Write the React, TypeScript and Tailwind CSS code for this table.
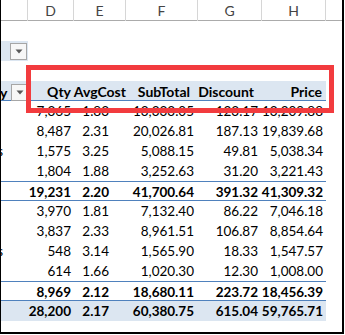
import React from 'react';

type RowKind = 'item' | 'sub' | 'grand';

interface PivotRow {
  kind: RowKind;
  label?: string;
  values: string[];
}

const rows: PivotRow[] = [
  { kind: 'item', values: ['7,365', '1.83', '13,333.05', '123.17', '13,209.88'] },
  { kind: 'item', values: ['8,487', '2.31', '20,026.81', '187.13', '19,839.68'] },
  { kind: 'item', label: 'Cookies', values: ['1,575', '3.25', '5,088.15', '49.81', '5,038.34'] },
  { kind: 'item', values: ['1,804', '1.88', '3,252.63', '31.20', '3,221.43'] },
  { kind: 'sub', values: ['19,231', '2.20', '41,700.64', '391.32', '41,309.32'] },
  { kind: 'item', values: ['3,970', '1.81', '7,132.40', '86.22', '7,046.18'] },
  { kind: 'item', values: ['3,837', '2.33', '8,961.51', '106.87', '8,854.64'] },
  { kind: 'item', label: 'Crackers', values: ['548', '3.14', '1,565.90', '18.33', '1,547.57'] },
  { kind: 'item', values: ['614', '1.66', '1,020.30', '12.30', '1,008.00'] },
  { kind: 'sub', values: ['8,969', '2.12', '18,680.11', '223.72', '18,456.39'] },
  { kind: 'grand', values: ['28,200', '2.17', '60,380.75', '615.04', '59,765.71'] },
];

const headers = ['Qty', 'AvgCost', 'SubTotal', 'Discount', 'Price'];
const letters = ['', 'D', 'E', 'F', 'G', 'H', ''];

// padding on the right of each value column, data vs. header
const dataPad = ['pr-[3px]', 'pr-[17px]', 'pr-[4px]', 'pr-[4px]', 'pr-[3px]'];
const headPad = ['pr-[3px]', 'pr-0', 'pr-[8px]', 'pr-[8px]', 'pr-[4px]'];

const grid = 'grid grid-cols-[27px_46px_52px_72px_64px_64px_1fr]';

function DropButton() {
  return (
    <div className="w-[17px] h-[17px] border border-[#a6a6a6] bg-[#f7f7f7] flex items-center justify-center">
      <svg width="8" height="5" viewBox="0 0 8 5">
        <path d="M0.5 0.5 L7.5 0.5 L4 4.5 Z" fill="#595959" />
      </svg>
    </div>
  );
}

export default function App() {
  return (
    <div
      className="w-[345px] h-[335px] bg-white relative overflow-hidden text-black"
      style={{ fontFamily: 'Lato, "Open Sans", sans-serif' }}
    >
      <div className="w-[344px] h-[334px] border-l border-r-2 border-b-2 border-black overflow-hidden">
        {/* column letters */}
        <div className={`${grid} h-[21px] border-b border-[#ababab]`}>
          {letters.map((l, i) => (
            <div
              key={i}
              className={`flex items-center justify-center text-[14px] text-[#444] ${
                i < 6 ? 'border-r border-[#d6d6d6]' : ''
              }`}
            >
              {l}
            </div>
          ))}
        </div>

        <div className="h-5" />

        {/* report filter row */}
        <div className={`${grid} h-5`}>
          <div className="bg-[#dce6f1] flex items-center justify-end pr-px">
            <DropButton />
          </div>
        </div>

        <div className="h-5" />

        {/* pivot header */}
        <div className={`${grid} h-5 bg-[#dce6f1] border-b border-[#4f81bd] w-[325px]`}>
          <div className="flex items-center justify-between overflow-hidden">
            <span className="text-[14px] font-bold leading-none -ml-[1px]">y</span>
            <DropButton />
          </div>
          {headers.map((h, i) => (
            <div
              key={h}
              className={`flex items-end justify-end pb-[2px] text-[14px] font-bold whitespace-nowrap ${headPad[i]}`}
            >
              {h}
            </div>
          ))}
        </div>

        {/* body */}
        {rows.map((r, ri) => (
          <div
            key={ri}
            className={`${grid} h-5 w-[325px] ${
              r.kind === 'sub'
                ? 'border-t border-b border-[#4f81bd] font-bold'
                : r.kind === 'grand'
                ? 'bg-[#dce6f1] font-bold'
                : ''
            }`}
          >
            <div className="flex items-end overflow-hidden pb-[2px]">
              {r.label && (
                <div className="w-[2px] shrink-0 flex justify-end">
                  <span className="text-[13.5px] whitespace-nowrap">{r.label}</span>
                </div>
              )}
            </div>
            {r.values.map((v, i) => (
              <div
                key={i}
                className={`flex items-end justify-end pb-[2px] text-[13.5px] whitespace-nowrap ${dataPad[i]}`}
              >
                {v}
              </div>
            ))}
          </div>
        ))}
      </div>

      {/* annotation box drawn over the sheet */}
      <div className="absolute left-[26px] top-[65px] w-[308px] h-[48px] border-[5px] border-[#f23b3e]" />
    </div>
  );
}
